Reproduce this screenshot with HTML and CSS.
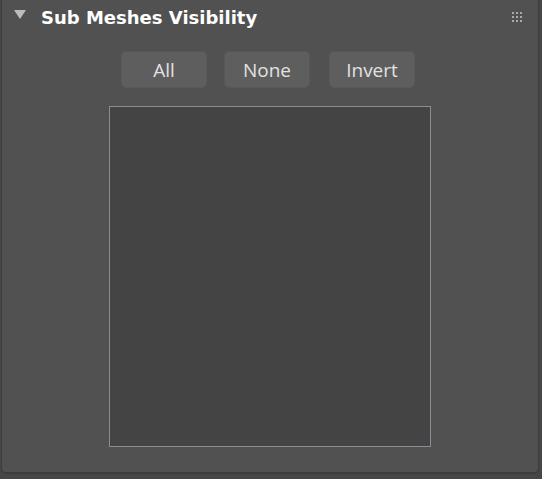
FILE: index.html
```html
<!DOCTYPE html>
<html>
<head>
<meta charset="utf-8">
<link rel="stylesheet" href="styles.css">
</head>
<body>
<div class="panel">
  <div class="header">
    <span class="arrow"></span>
    <span class="title">Sub Meshes Visibility</span>
    <span class="grip">
      <i></i><i></i><i></i><i></i><i></i><i></i><i></i><i></i><i></i>
    </span>
  </div>
  <div class="buttons">
    <button class="btn btn-all">All</button>
    <button class="btn btn-none">None</button>
    <button class="btn btn-invert">Invert</button>
  </div>
  <div class="listbox"></div>
</div>
</body>
</html>
```
FILE: styles.css
```css
html, body {
  margin: 0;
  padding: 0;
  background: #464646;
  width: 542px;
  height: 479px;
  overflow: hidden;
}
.panel {
  box-sizing: border-box;
  margin: -4px 4px 0 2px;
  height: 476px;
  background: #515151;
  border-radius: 4px;
  box-shadow: 0 1px 0 1px #3d3d3d;
  padding-top: 4px;
}
.header {
  display: flex;
  align-items: center;
  height: 36px;
  padding-left: 12px;
  padding-right: 16px;
}
.arrow {
  width: 0;
  height: 0;
  border-left: 6px solid transparent;
  border-right: 6px solid transparent;
  border-top: 9px solid #bcbcbc;
  margin-right: 15px;
  margin-top: -7px;
}
.title {
  font-family: "DejaVu Sans", Verdana, sans-serif;
  font-weight: bold;
  font-size: 18px;
  color: #ffffff;
  flex: 1;
  margin-top: -2px;
}
.grip {
  display: grid;
  grid-template-columns: repeat(3, 2px);
  grid-auto-rows: 2px;
  gap: 2px;
  margin-top: -2px;
}
.grip i {
  display: block;
  width: 2px;
  height: 2px;
  background: #a9a9a9;
}
.buttons {
  display: flex;
  justify-content: center;
  gap: 17px;
  margin-top: 15px;
  padding-right: 4px;
}
.btn {
  box-sizing: border-box;
  width: 86px;
  height: 37px;
  background: #5e5e5e;
  border: 1px solid #585858;
  border-radius: 5px;
  color: #e2e2e2;
  font-family: "Open Sans", "Noto Sans", sans-serif;
  font-size: 19px;
  padding: 0;
  margin: 0;
}
.btn-invert {
  margin-left: 2px;
}
.listbox {
  box-sizing: border-box;
  width: 322px;
  height: 341px;
  margin: 18px 0 0 107px;
  background: #444444;
  border: 1px solid #8c8c98;
}
```
